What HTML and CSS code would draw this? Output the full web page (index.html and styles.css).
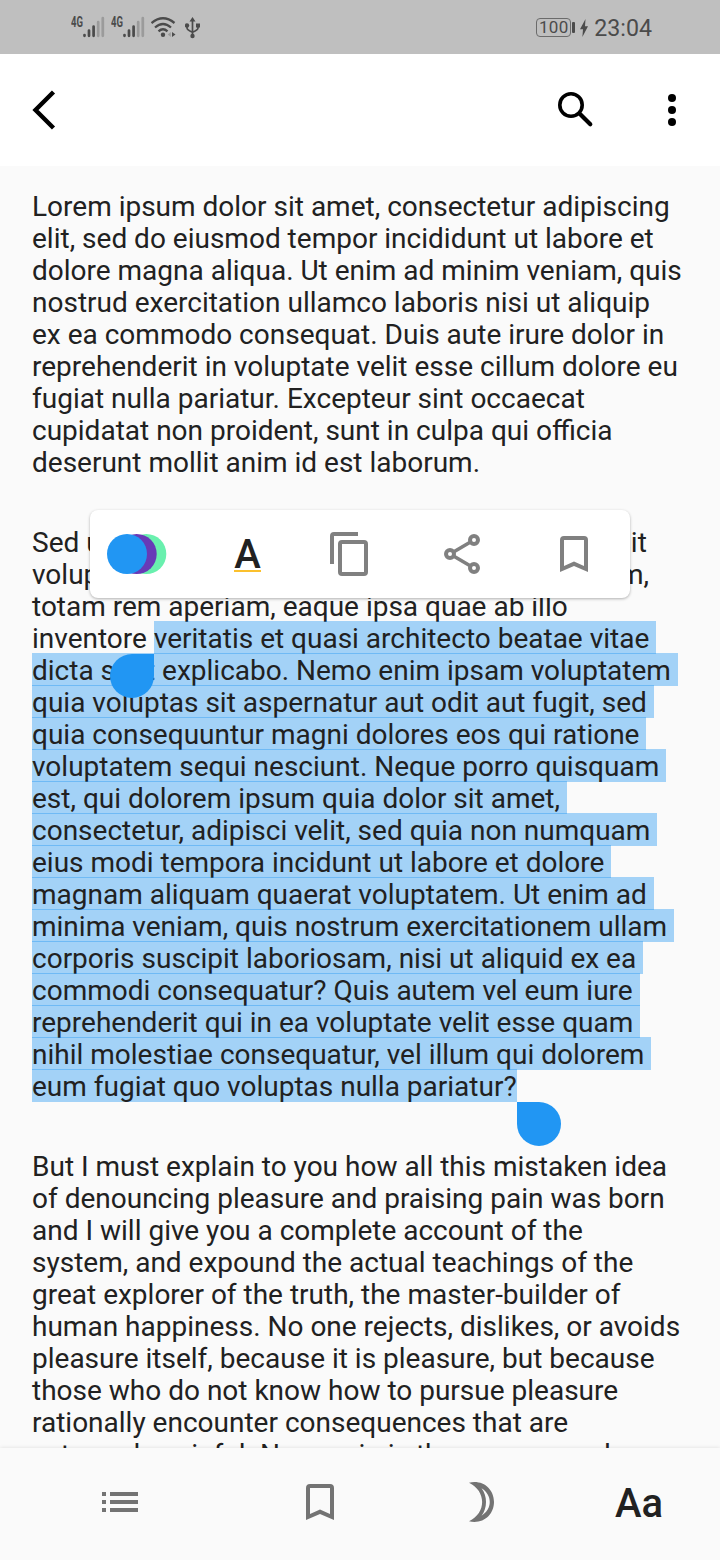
FILE: index.html
```html
<!DOCTYPE html>
<html lang="en">
<head>
<meta charset="utf-8">
<title>Reader</title>
<link rel="stylesheet" href="styles.css">
</head>
<body>
<div class="screen">
  <div class="status">
    <div class="status-left">
      <div class="cell"><span class="net">4G</span>
        <svg width="22" height="22" viewBox="0 0 22 22" stroke-width="2.7" stroke-linecap="round" stroke="#4b4b4b"><path d="M1.500 19v.8M6 14.500v5.300M10.600 10.500v9.300"/><path stroke="#9b9b9b" d="M15.200 6v13.800M19.800 2v17.800"/></svg></div>
      <div class="cell"><span class="net">4G</span>
        <svg width="22" height="22" viewBox="0 0 22 22" stroke-width="2.700" stroke-linecap="round" stroke="#4b4b4b"><path d="M1.500 19v.8M6 14.500v5.300M10.600 10.500v9.300"/><path stroke="#9b9b9b" d="M15.200 6v13.800M19.800 2v17.800"/></svg></div>
      <svg class="wifi" width="26" height="22" viewBox="0 0 26 22" fill="none" stroke="#4b4b4b" stroke-width="2.300"><path d="M.5 6Q12-3.500 23.500 6M4 10.500Q12 3.500 20 10.500M7.500 14.300Q12 10.200 16.500 14.300"/><circle cx="12" cy="17.700" r="2.200" fill="#4b4b4b" stroke="none"/><path d="M19.800 15v5l-3-2.500z" fill="#9b9b9b" stroke="none"/><path d="M21 15v5l3.500-2.500z" fill="#4b4b4b" stroke="none"/></svg>
      <svg class="usb" width="15" height="22" viewBox="0 0 15 22" fill="none" stroke="#4b4b4b" stroke-width="1.700"><path d="M7.500 3v16M2 8v3q0 2 5.500 4.200M13 8v3q0 2-5.500 4.200"/><path d="M7.500 0l3 4.500h-6zM11 6.500h4v4h-4z" fill="#4b4b4b" stroke="none"/><circle cx="2" cy="8.500" r="2.200" fill="#4b4b4b" stroke="none"/><circle cx="7.500" cy="19" r="2.200" fill="#4b4b4b" stroke="none"/></svg>
    </div>
    <div class="status-right">
      <span class="battery">100</span><span class="battery-cap"></span>
      <svg class="bolt" width="8" height="18" viewBox="0 0 8 18"><path d="M5.500 0L0 10.300h3L2.400 18 8 7.300H5z" fill="#4b4b4b"/></svg>
      <span class="clock">23:04</span>
    </div>
  </div>
  <header class="appbar">
    <svg width="24" height="40" viewBox="0 0 24 40"><path d="M21.500 2L3.500 20l18 18" fill="none" stroke="#000" stroke-width="4.400"/></svg>
    <div class="appbar-actions">
      <svg width="36" height="36" viewBox="0 0 36 36" fill="none" stroke="#000"><circle cx="13" cy="13" r="11.200" stroke-width="3.600"/><path d="M22.500 22.500l9.800 9.800" stroke-width="4.200" stroke-linecap="round"/></svg>
      <svg width="8" height="32" viewBox="0 0 8 32"><circle cx="4" cy="4" r="4"/><circle cx="4" cy="16" r="4"/><circle cx="4" cy="28" r="4"/></svg>
    </div>
  </header>
  <main class="page">
    <div class="para">
      <div class="line">Lorem ipsum dolor sit amet, consectetur adipiscing</div>
      <div class="line">elit, sed do eiusmod tempor incididunt ut labore et</div>
      <div class="line">dolore magna aliqua. Ut enim ad minim veniam, quis</div>
      <div class="line">nostrud exercitation ullamco laboris nisi ut aliquip</div>
      <div class="line">ex ea commodo consequat. Duis aute irure dolor in</div>
      <div class="line">reprehenderit in voluptate velit esse cillum dolore eu</div>
      <div class="line">fugiat nulla pariatur. Excepteur sint occaecat</div>
      <div class="line">cupidatat non proident, sunt in culpa qui officia</div>
      <div class="line">deserunt mollit anim id est laborum.</div>
    </div>
    <div class="para">
      <div class="line">Sed ut perspiciatis unde omnis iste natus error sit</div>
      <div class="line">voluptatem accusantium doloremque laudantium,</div>
      <div class="line">totam rem aperiam, eaque ipsa quae ab illo</div>
      <div class="line">inventore <span class="sel">veritatis et quasi architecto beatae vitae <i class="handle handle-start"></i></span></div>
      <div class="line"><span class="sel">dicta sunt explicabo. Nemo enim ipsam voluptatem </span></div>
      <div class="line"><span class="sel">quia voluptas sit aspernatur aut odit aut fugit, sed </span></div>
      <div class="line"><span class="sel">quia consequuntur magni dolores eos qui ratione </span></div>
      <div class="line"><span class="sel">voluptatem sequi nesciunt. Neque porro quisquam </span></div>
      <div class="line"><span class="sel">est, qui dolorem ipsum quia dolor sit amet, </span></div>
      <div class="line"><span class="sel">consectetur, adipisci velit, sed quia non numquam </span></div>
      <div class="line"><span class="sel">eius modi tempora incidunt ut labore et dolore </span></div>
      <div class="line"><span class="sel">magnam aliquam quaerat voluptatem. Ut enim ad </span></div>
      <div class="line"><span class="sel">minima veniam, quis nostrum exercitationem ullam </span></div>
      <div class="line"><span class="sel">corporis suscipit laboriosam, nisi ut aliquid ex ea </span></div>
      <div class="line"><span class="sel">commodi consequatur? Quis autem vel eum iure </span></div>
      <div class="line"><span class="sel">reprehenderit qui in ea voluptate velit esse quam </span></div>
      <div class="line"><span class="sel">nihil molestiae consequatur, vel illum qui dolorem </span></div>
      <div class="line"><span class="sel">eum fugiat quo voluptas nulla pariatur?<i class="handle handle-end"></i></span></div>
    </div>
    <div class="para">
      <div class="line">But I must explain to you how all this mistaken idea</div>
      <div class="line">of denouncing pleasure and praising pain was born</div>
      <div class="line">and I will give you a complete account of the</div>
      <div class="line">system, and expound the actual teachings of the</div>
      <div class="line">great explorer of the truth, the master-builder of</div>
      <div class="line">human happiness. No one rejects, dislikes, or avoids</div>
      <div class="line">pleasure itself, because it is pleasure, but because</div>
      <div class="line">those who do not know how to pursue pleasure</div>
      <div class="line">rationally encounter consequences that are</div>
      <div class="line">extremely painful. Nor again is there anyone who</div>
    </div>
    <div class="popup">
      <svg width="60" height="40" viewBox="0 0 60 40"><circle cx="39.300" cy="20" r="20" fill="#69f0ae"/><circle cx="29.700" cy="20" r="20" fill="#673ab7"/><circle cx="20" cy="20" r="20" fill="#2196f3"/></svg>
      <span class="underline-a">A</span>
      <svg class="copy" width="38" height="44" viewBox="0 0 38 44" fill="none" stroke="#808080" stroke-width="4"><path d="M2 32V4q0-2 2-2h24"/><rect x="10" y="10" width="26" height="32" rx="2"/></svg>
      <svg class="share" width="36" height="40" viewBox="0 0 36 40" fill="none" stroke="#808080" stroke-width="4"><circle cx="6" cy="20" r="4"/><circle cx="30" cy="6" r="4"/><circle cx="30" cy="34" r="4"/><path stroke-width="3.600" d="M9.500 18l17-10M9.500 22l17 10"/></svg>
      <svg class="mark" width="28" height="36" viewBox="0 0 28 36"><path fill="#808080" fill-rule="evenodd" d="M4 0h20q4 0 4 4v32l-14-6-14 6V4q0-4 4-4zM4 4v26l10-4.400L24 30V4z"/></svg>
    </div>
  </main>
  <nav class="bottombar">
    <svg width="36" height="20" viewBox="0 0 36 20" fill="#737373"><path d="M0 0h4v4H0zM8 0h28v4H8zM0 8h4v4H0zM8 8h28v4H8zM0 16h4v4H0zM8 16h28v4H8z"/></svg>
    <svg class="nav-mark" width="28" height="36" viewBox="0 0 28 36"><path fill="#737373" fill-rule="evenodd" d="M4 0h20q4 0 4 4v32l-14-6-14 6V4q0-4 4-4zM4 4v26l10-4.400L24 30V4z"/></svg>
    <svg class="nav-moon" width="26" height="40" viewBox="0 0 26 40"><path fill="#737373" fill-rule="evenodd" d="M0 .7C14-2.500 25 7 25 20S14 42.500 0 39.300C17.500 31 17.500 9 0 .7zM12.500 6.300C18.500 14 18.500 26 12.500 33.700C23.500 27 23.500 13 12.500 6.300z"/></svg>
    <span class="font-aa">Aa</span>
  </nav>
</div>
</body>
</html>
```
FILE: styles.css
```css
* { box-sizing: border-box; }
body { margin: 0; font-family: Roboto, "Liberation Sans", sans-serif; color: #212121; }
svg { display: block; flex: none; }
.screen { width: 720px; height: 1560px; display: flex; flex-direction: column; overflow: hidden; background: #fafafa; }

.status { height: 54px; flex: none; display: flex; justify-content: space-between; padding: 0 68px 0 71px; background: #bfbfbf; color: #4b4b4b; }
.status-left { display: flex; padding-top: 16px; }
.cell { display: flex; width: 40px; }
.net { width: 12px; font-size: 14px; line-height: 12px; font-weight: 700; transform: scaleX(.68); transform-origin: left; }
.wifi { margin-top: 1px; }
.usb { margin: 1px 0 0 8px; }
.status-right { display: flex; align-items: center; padding-top: 1px; }
.battery { width: 35px; height: 19px; border: 1.5px solid #6b6b6b; border-radius: 4px; font-size: 17px; line-height: 17px; text-align: center; letter-spacing: .3px; }
.battery-cap { width: 3px; height: 11px; margin-left: 1px; border-radius: 1px; background: #4b4b4b; }
.bolt { margin-left: 5px; }
.clock { margin-left: 6px; padding-top: 1px; font-size: 23.2px; line-height: 28px; }

.appbar { height: 112px; flex: none; display: flex; align-items: center; justify-content: space-between; padding: 0 44px 0 32px; background: #fff; }
.appbar-actions { display: flex; align-items: center; gap: 74px; }

.page { position: relative; flex: 1; min-height: 0; overflow: hidden; padding: 24px 0 0 32px; }
.para { margin-bottom: 48px; }
.line { height: 32px; font-size: 28px; line-height: 34px; white-space: pre; }
.sel { position: relative; display: inline-block; height: 33px; margin-top: -1px; padding-top: 1px; vertical-align: top; background: rgba(33, 150, 243, .4); }
.handle { position: absolute; z-index: 1; width: 44px; height: 44px; background: #2196f3; }
.handle-start { top: 33px; left: -44px; border-radius: 50% 0 50% 50%; }
.handle-end { top: 33px; left: 100%; border-radius: 0 50% 50% 50%; }

.popup { position: absolute; z-index: 2; left: 90px; top: 344px; width: 540px; height: 88px; display: flex; align-items: center; padding-left: 17px; border-radius: 8px; background: #fff; box-shadow: 0 1px 3px rgba(0, 0, 0, .3); }
.underline-a { width: 27px; height: 34px; margin: 2px 0 0 67px; border-bottom: 2px solid #fbc02d; font-size: 40px; font-weight: 500; line-height: 34px; text-align: center; }
.copy { margin-left: 69px; }
.share { margin-left: 76px; }
.mark { margin-left: 80px; }

.bottombar { position: relative; height: 112px; flex: none; display: flex; align-items: center; padding: 0 0 4px 102px; background: #fafafa; box-shadow: 0 0 4px rgba(0, 0, 0, .12); }
.nav-mark { margin-left: 168px; }
.nav-moon { margin-left: 135px; }
.font-aa { margin: 4px 0 0 120px; font-size: 40px; font-weight: 500; line-height: 44px; }
```
